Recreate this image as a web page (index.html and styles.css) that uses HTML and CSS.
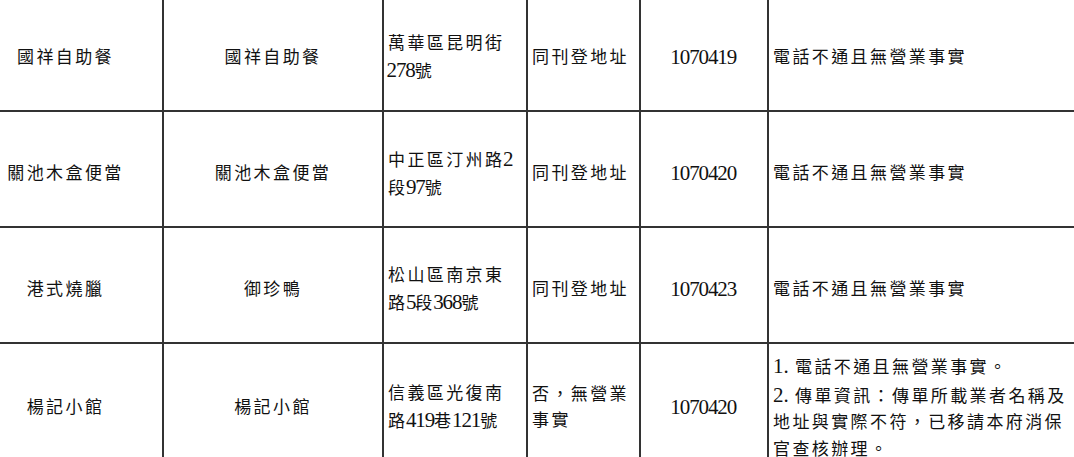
FILE: index.html
```html
<!DOCTYPE html>
<html lang="zh-Hant">
<head>
<meta charset="utf-8">
<title>查核結果</title>
<link rel="stylesheet" href="styles.css">
</head>
<body>
<div class="sheet">
  <div class="c mid"><p class="t">國祥自助餐</p></div>
  <div class="c mid"><p class="t">國祥自助餐</p></div>
  <div class="c"><p class="t">萬華區昆明街<br><span class="n">278</span>號</p></div>
  <div class="c"><p class="t">同刊登地址</p></div>
  <div class="c mid"><p class="t"><span class="n">1070419</span></p></div>
  <div class="c"><p class="t">電話不通且無營業事實</p></div>

  <div class="c mid"><p class="t">關池木盒便當</p></div>
  <div class="c mid"><p class="t">關池木盒便當</p></div>
  <div class="c"><p class="t">中正區汀州路<span class="n">2</span><br>段<span class="n">97</span>號</p></div>
  <div class="c"><p class="t">同刊登地址</p></div>
  <div class="c mid"><p class="t"><span class="n">1070420</span></p></div>
  <div class="c"><p class="t">電話不通且無營業事實</p></div>

  <div class="c mid"><p class="t">港式燒臘</p></div>
  <div class="c mid"><p class="t">御珍鴨</p></div>
  <div class="c"><p class="t">松山區南京東<br>路<span class="n">5</span>段<span class="n">368</span>號</p></div>
  <div class="c"><p class="t">同刊登地址</p></div>
  <div class="c mid"><p class="t"><span class="n">1070423</span></p></div>
  <div class="c"><p class="t">電話不通且無營業事實</p></div>

  <div class="c mid"><p class="t">楊記小館</p></div>
  <div class="c mid"><p class="t">楊記小館</p></div>
  <div class="c"><p class="t">信義區光復南<br>路<span class="n">419</span>巷<span class="n">121</span>號</p></div>
  <div class="c"><p class="t">否，無營業<br>事實</p></div>
  <div class="c mid"><p class="t"><span class="n">1070420</span></p></div>
  <div class="c"><p class="t"><span class="n idx">1.</span>電話不通且無營業事實。<br><span class="n idx">2.</span>傳單資訊：傳單所載業者名稱及<br>地址與實際不符，已移請本府消保<br>官查核辦理。</p></div>
</div>
</body>
</html>
```

FILE: styles.css
```css
html, body {
  margin: 0;
  padding: 0;
  background: #ffffff;
}

body {
  overflow: hidden;
  font-family: "Liberation Serif", "Noto Sans CJK TC", serif;
  color: #111111;
}

.sheet {
  display: grid;
  grid-template-columns: 193px 218px 142px 111px 126px 321px;
  grid-template-rows: 114px 114px 114px 118px;
  gap: 2px;
  padding: 2px;
  background: #333333;
  margin-top: -6px;
  margin-left: -33px;
  width: max-content;
}

.c {
  background: #ffffff;
  display: flex;
  align-items: center;
  justify-content: flex-start;
  padding: 0 0 0 4px;
}

.c.mid {
  justify-content: center;
  padding: 0;
}

.t {
  margin: 0;
  font-size: 17px;
  line-height: 26.5px;
  letter-spacing: 2.4px;
  white-space: nowrap;
  padding-top: 10px;
}

.n {
  font-family: "Liberation Serif", serif;
  font-size: 21px;
  letter-spacing: -1.1px;
  margin-left: -1.5px;
}

.idx {
  display: inline-block;
  width: 22px;
  letter-spacing: 0;
  margin-left: 0;
}
```
